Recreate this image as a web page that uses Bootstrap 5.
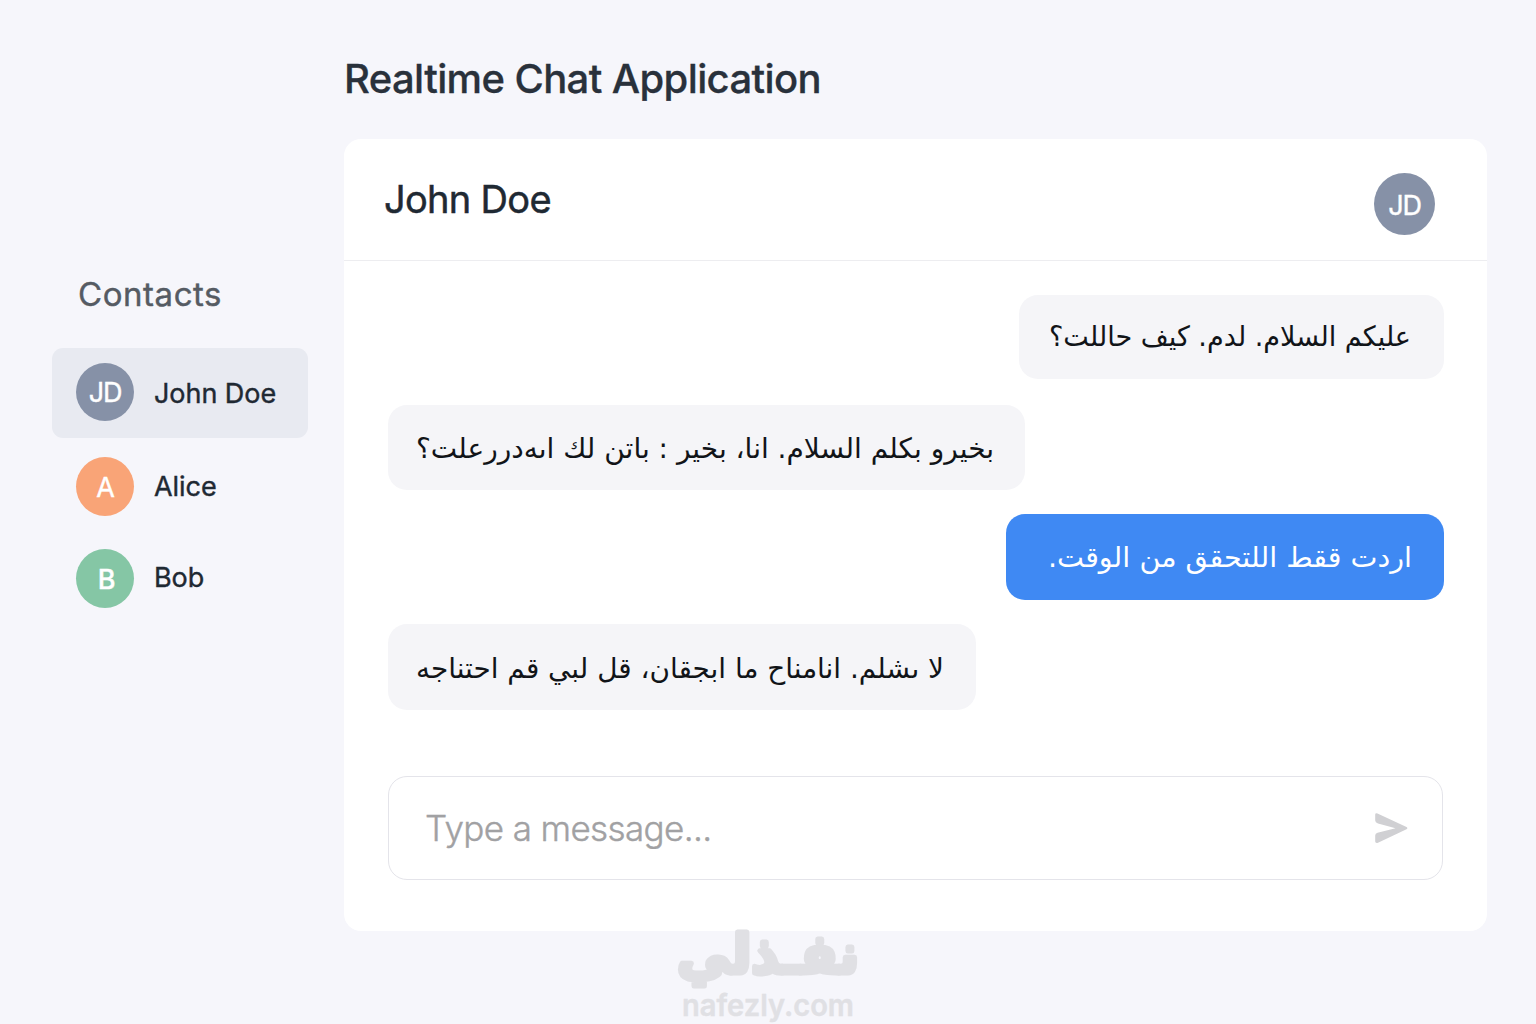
<!DOCTYPE html>
<html lang="en">
<head>
  <meta charset="UTF-8">
  <meta name="viewport" content="width=device-width, initial-scale=1">
  <title>Realtime Chat Application</title>
  <link href="https://cdn.jsdelivr.net/npm/bootstrap@5.3.0/dist/css/bootstrap.min.css" rel="stylesheet">
  <style>
    :root {
      --page-bg: #f6f6fb;
      --ink: #1f2933;
      --slate: #8691a7;
      --bubble: #f5f5f8;
      --blue: #3f89f3;
    }

    body {
      height: 1024px;
      overflow: hidden;
      background: var(--page-bg);
      color: var(--ink);
      font-family: Inter, "Liberation Sans", sans-serif;
    }

    .chat-app {
      padding: 0 49px 0 52px;
      gap: 36px;
    }

    /* contacts */
    .contacts {
      width: 256px;
      padding-top: 274px;
    }

    .contacts-title {
      font-size: 33px;
      line-height: 40px;
      font-weight: 400;
      letter-spacing: .55px;
      -webkit-text-stroke: .4px;
      color: #555b63;
      padding-left: 26px;
      margin-bottom: 34px;
    }

    .contact {
      height: 90px;
      padding: 0 24px 2px;
      gap: 20px;
      border-radius: 11px;
      font-size: 27px;
      letter-spacing: -.05px;
      -webkit-text-stroke: .4px;
      color: var(--ink);
      text-decoration: none;
    }

    .contact + .contact {
      height: 91px;
      margin-top: 4px;
    }

    .contact + .contact + .contact {
      height: 92px;
      margin-top: 0;
    }

    .contact.current {
      background: #e8eaf1;
    }

    .contact-name {
      padding-top: 4px;
    }

    .contact + .contact .contact-name {
      padding-top: 1px;
    }

    .avatar {
      width: 58px;
      height: 58px;
      padding-top: 3px;
      font-size: 27px;
      letter-spacing: -1.2px;
      color: #fff;
      background: var(--slate);
    }

    .avatar-orange,
    .avatar-green {
      height: 59px;
      padding-top: 4px;
    }

    .avatar-orange { background: #f9a477; }
    .avatar-green { background: #85c6a5; font-weight: 500; padding-left: 2px; }

    .avatar-lg {
      width: 61px;
      height: 62px;
      margin-top: 8px;
      padding-top: 5px;
      -webkit-text-stroke: .4px;
    }

    /* chat card */
    .app-title {
      height: 139px;
      padding-top: 54px;
      margin: 0;
      font-size: 40px;
      line-height: 50px;
      font-weight: 500;
      letter-spacing: -.62px;
      -webkit-text-stroke: .3px;
      color: #29313b;
    }

    .chat-card {
      height: 792px;
      border-radius: 17px;
    }

    .chat-head {
      height: 122px;
      padding: 0 52px 0 40px;
      border-bottom: 1px solid #ededf0;
    }

    .chat-name {
      font-size: 38px;
      font-weight: 400;
      letter-spacing: -.7px;
      -webkit-text-stroke: .5px;
      margin: 0;
    }

    .messages {
      padding: 34px 43px 0 44px;
    }

    .bubble {
      background: var(--bubble);
      border-radius: 19px;
      padding: 0 28px;
      color: #111418;
    }

    .bubble svg {
      display: block;
      font-family: "DejaVu Sans", sans-serif;
      font-size: 28px;
      overflow: visible;
    }

    .bubble-sent {
      background: var(--blue);
      color: #fff;
    }

    .b1 { width: 425px; height: 84px; margin-bottom: 26px; }
    .b2 { width: 637px; height: 85px; margin-bottom: 24px; }
    .b3 { width: 438px; height: 86px; margin-bottom: 24px; }
    .b4 { width: 588px; height: 86px; }

    .composer {
      height: 104px;
      margin: 66px 44px 0;
      padding: 0 34px 0 36px;
      border: 1px solid #e4e4ea;
      border-radius: 19px;
    }

    .composer input {
      font-size: 35px;
      letter-spacing: -.62px;
    }

    .composer input::placeholder {
      color: #a1a1a3;
      font-weight: 300;
      -webkit-text-stroke: .4px;
      opacity: 1;
    }

    /* watermark laid over the foot of the card */
    .watermark {
      position: absolute;
      left: 670px;
      top: 920px;
      pointer-events: none;
      fill: #e0e0e4;
      stroke: #e0e0e4;
      stroke-linejoin: round;
    }
  </style>
</head>
<body>
  <div class="chat-app d-flex">
    <aside class="contacts flex-shrink-0">
      <h2 class="contacts-title">Contacts</h2>
      <nav class="d-flex flex-column">
        <a href="#" class="contact current d-flex align-items-center">
          <span class="avatar rounded-circle d-flex align-items-center justify-content-center">JD</span>
          <span class="contact-name">John Doe</span>
        </a>
        <a href="#" class="contact d-flex align-items-center">
          <span class="avatar avatar-orange rounded-circle d-flex align-items-center justify-content-center">A</span>
          <span class="contact-name">Alice</span>
        </a>
        <a href="#" class="contact d-flex align-items-center">
          <span class="avatar avatar-green rounded-circle d-flex align-items-center justify-content-center">B</span>
          <span class="contact-name">Bob</span>
        </a>
      </nav>
    </aside>

    <main class="flex-grow-1">
      <h1 class="app-title">Realtime Chat Application</h1>
      <section class="chat-card bg-white">
        <header class="chat-head d-flex align-items-center justify-content-between">
          <h2 class="chat-name">John Doe</h2>
          <span class="avatar avatar-lg rounded-circle d-flex align-items-center justify-content-center">JD</span>
        </header>

        <div class="messages d-flex flex-column align-items-start">
          <div class="bubble b1 align-self-end">
            <svg width="365" height="84" fill="currentColor" direction="rtl" lang="ar">
              <text x="364" y="51" textLength="362" lengthAdjust="spacingAndGlyphs">عليكم السلام. لدم. كيف حاللت؟</text>
            </svg>
          </div>
          <div class="bubble b2">
            <svg width="580" height="85" fill="currentColor" direction="rtl" lang="ar">
              <text x="578" y="52.500" textLength="578" lengthAdjust="spacingAndGlyphs">بخيرو بكلم السلام. انا، بخير : باتن لك اىەدررعلت؟</text>
            </svg>
          </div>
          <div class="bubble bubble-sent b3 align-self-end">
            <svg width="380" height="86" fill="currentColor" direction="rtl" lang="ar">
              <text x="378" y="53" textLength="364" lengthAdjust="spacingAndGlyphs">اردت ققط اللتحقق من الوقت.</text>
            </svg>
          </div>
          <div class="bubble b4">
            <svg width="530" height="86" fill="currentColor" direction="rtl" lang="ar">
              <text x="528" y="53.500" textLength="528" lengthAdjust="spacingAndGlyphs">لا ىشلم. انامناح ما ابجقان، قل لبي قم احتناجه</text>
            </svg>
          </div>
        </div>

        <form class="composer d-flex align-items-center">
          <input type="text" class="form-control border-0 bg-transparent shadow-none p-0" placeholder="Type a message...">
          <button type="button" class="btn border-0 p-0 lh-1" aria-label="Send">
            <svg width="34" height="34" viewBox="0 -2 34 34" fill="#d0d0d3">
              <path d="M1.200 1.500Q1.200 -.200 3.500 .400L32.500 14.100Q34.200 15.200 32.500 16.200L4 29.800Q1.200 30.500 1.200 28.500V22.500Q1.200 20.500 3.500 19.800L21.500 15.200L4 10.500Q1.200 9.500 1.200 7.500Z"/>
            </svg>
          </button>
        </form>
      </section>
    </main>
  </div>

  <svg class="watermark" width="200" height="104">
    <text x="189" y="53" direction="rtl" lang="ar" font-family="DejaVu Sans, sans-serif" font-weight="700" font-size="54" stroke-width="5" textLength="182" lengthAdjust="spacingAndGlyphs">نفـذلي</text>
    <text x="12" y="96" font-family="Inter, sans-serif" font-weight="600" font-size="30" stroke-width=".4" textLength="172" lengthAdjust="spacingAndGlyphs">nafezly.com</text>
  </svg>

  <script src="https://cdn.jsdelivr.net/npm/bootstrap@5.3.0/dist/js/bootstrap.bundle.min.js"></script>
</body>
</html>
